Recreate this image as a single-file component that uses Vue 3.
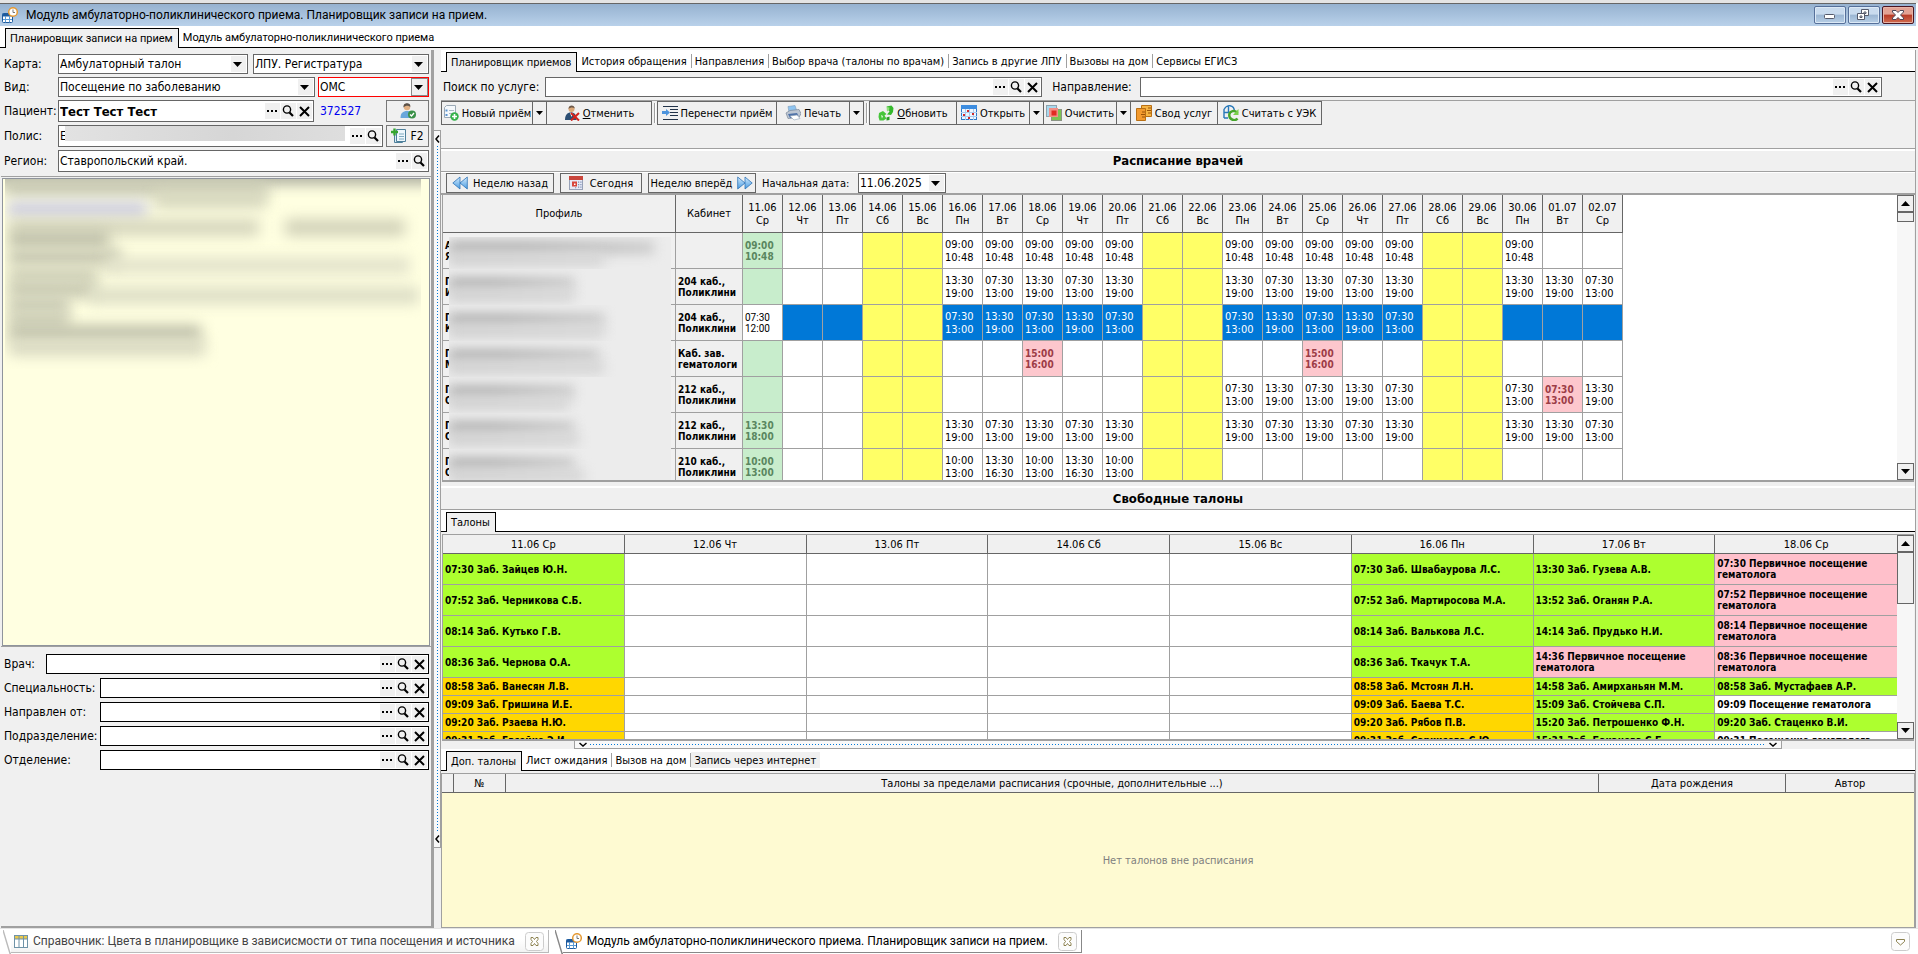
<script setup>
import { ref } from 'vue'

const mainTabs = ['Планировщик приемов', 'История обращения', 'Направления', 'Выбор врача (талоны по врачам)', 'Запись в другие ЛПУ', 'Вызовы на дом', 'Сервисы ЕГИСЗ']
const extraTabs = ['Доп. талоны', 'Лист ожидания', 'Вызов на дом', 'Запись через интернет']
const filters = ['Врач:', 'Специальность:', 'Направлен от:', 'Подразделение:', 'Отделение:']

const patient = ref('Тест Тест Тест')
const region = ref('Ставропольский край.')

const weekdays = ['Ср', 'Чт', 'Пт', 'Сб', 'Вс', 'Пн', 'Вт']
const days = Array.from({ length: 22 }, (_, i) => {
  const d = 11 + i
  return {
    date: d <= 30 ? `${d}.06` : `0${d - 30}.07`,
    name: weekdays[i % 7],
    weekend: i % 7 === 3 || i % 7 === 4
  }
})

const spans = {
  A: '07:30\n13:00',
  B: '13:30\n19:00',
  C: '10:00\n13:00',
  D: '13:30\n16:30',
  E: '09:00\n10:48',
  F: '15:00\n16:00'
}

const doctors = [
  { a: 'А', b: 'Я', w: 205, w2: 155, room: '', today: '09:00\n10:48', plan: '.....EEEEE..EEEEE..E..' },
  { a: 'П', b: 'И', w: 125, w2: 125, room: '204 каб.,\nПоликлини', today: '', plan: '.....BABAB..BABAB..BBA' },
  { a: 'П', b: 'К', w: 155, w2: 155, room: '204 каб.,\nПоликлини', today: '07:30\n12:00', plan: '.....ABABA..ABABA.....', selected: true },
  { a: 'П', b: 'М', w: 150, w2: 155, room: 'Каб. зав.\nгематологи', today: '', plan: '.......f......f.......' },
  { a: 'П', b: 'О', w: 125, w2: 120, room: '212 каб.,\nПоликлини', today: '', plan: '............ABABA..AaB' },
  { a: 'П', b: 'О', w: 125, w2: 130, room: '212 каб.,\nПоликлини', today: '13:30\n18:00', plan: '.....BABAB..BABAB..BBA' },
  { a: 'П', b: 'О', w: 125, w2: 135, room: '210 каб.,\nПоликлини', today: '10:00\n13:00', plan: '.....CDCDC............' }
]

function cellText(doc, i) {
  if (i === 0) return doc.today
  return spans[doc.plan[i].toUpperCase()] || ''
}

function cellClass(doc, i) {
  if (days[i].weekend) return 'weekend'
  if (i === 0) return doc.selected ? 'current' : 'today'
  if (/[a-z]/.test(doc.plan[i])) return 'alert'
  return doc.selected ? 'selected' : ''
}

const ticketDays = ['11.06 Ср', '12.06 Чт', '13.06 Пт', '14.06 Сб', '15.06 Вс', '16.06 Пн', '17.06 Вт', '18.06 Ср']
const blank = () => [['', ''], ['', ''], ['', ''], ['', '']]
const row = (a, b, c, d) => [a, ...blank(), b, c, d]
const tickets = [
  row(['07:30 Заб. Зайцев Ю.Н.', 'free'], ['07:30 Заб. Швабаурова Л.С.', 'free'], ['13:30 Заб. Гузева А.В.', 'free'], ['07:30 Первичное посещение гематолога', 'initial']),
  row(['07:52 Заб. Черникова С.Б.', 'free'], ['07:52 Заб. Мартиросова М.А.', 'free'], ['13:52 Заб. Оганян Р.А.', 'free'], ['07:52 Первичное посещение гематолога', 'initial']),
  row(['08:14 Заб. Кутько Г.В.', 'free'], ['08:14 Заб. Валькова Л.С.', 'free'], ['14:14 Заб. Прудько Н.И.', 'free'], ['08:14 Первичное посещение гематолога', 'initial']),
  row(['08:36 Заб. Чернова О.А.', 'free'], ['08:36 Заб. Ткачук Т.А.', 'free'], ['14:36 Первичное посещение гематолога', 'initial'], ['08:36 Первичное посещение гематолога', 'initial']),
  row(['08:58 Заб. Ванесян Л.В.', 'busy'], ['08:58 Заб. Мстоян Л.Н.', 'busy'], ['14:58 Заб. Амирханьян М.М.', 'free'], ['08:58 Заб. Мустафаев А.Р.', 'free']),
  row(['09:09 Заб. Гришина И.Е.', 'busy'], ['09:09 Заб. Баева Т.С.', 'busy'], ['15:09 Заб. Стойчева С.П.', 'free'], ['09:09 Посещение гематолога', '']),
  row(['09:20 Заб. Рзаева Н.Ю.', 'busy'], ['09:20 Заб. Рябов П.В.', 'busy'], ['15:20 Заб. Петрошенко Ф.Н.', 'free'], ['09:20 Заб. Стаценко В.И.', 'free']),
  row(['09:31 Заб. Евсейко Э.И.', 'busy'], ['09:31 Заб. Саркисова С.Ю.', 'busy'], ['15:31 Заб. Баканова С.Б.', 'free'], ['09:31 Посещение гематолога', ''])
]

const memoLines = [
  { y: -12, x: -10, w: 440, c: '#a9aa9c' },
  { y: 0, x: 0, w: 262, c: '#c9cab4' }, { y: 12, x: 150, w: 112, c: '#d6d7be' },
  { y: 22, x: 2, w: 140, c: '#cfcfe2' },
  { y: 40, x: 4, w: 250, c: '#d6d6bd' }, { y: 40, x: 280, w: 120, c: '#d2d2b9' }, { y: 52, x: 4, w: 100, c: '#bfc0aa' },
  { y: 70, x: 4, w: 112, c: '#c5c6b0' }, { y: 78, x: 100, w: 305, c: '#e3e3cb' },
  { y: 88, x: 4, w: 88, c: '#d0d1b9' }, { y: 102, x: 4, w: 88, c: '#c8c9b2' },
  { y: 108, x: 84, w: 330, c: '#dddec6' }, { y: 118, x: 4, w: 60, c: '#c8c9b3' },
  { y: 132, x: 4, w: 60, c: '#cdceb7' }, { y: 146, x: 4, w: 192, c: '#bfc0aa' },
  { y: 160, x: 4, w: 196, c: '#dadac3' }
]
</script>

<template>
  <div class="app">
    <svg class="defs" aria-hidden="true">
      <defs>
        <linearGradient id="blueGrad" x1="0" y1="0" x2="0" y2="1">
          <stop offset="0" stop-color="#d3ecff" /><stop offset="1" stop-color="#4a9be0" />
        </linearGradient>
      </defs>
      <symbol id="i-dots" viewBox="0 0 15 16"><path d="M2 7h2v2H2zM6 7h2v2H6zM10 7h2v2h-2z" fill="#000" /></symbol>
      <symbol id="i-find" viewBox="0 0 15 16"><circle cx="6" cy="6.5" r="3.6" fill="none" stroke="#000" stroke-width="1.4" /><path d="M8.5 9.5l3.5 3.5" stroke="#000" stroke-width="2.2" /></symbol>
      <symbol id="i-x" viewBox="0 0 15 16"><path d="M3 4l9 9M12 4l-9 9" stroke="#000" stroke-width="2" fill="none" /></symbol>
      <symbol id="i-down" viewBox="0 0 9 5"><path d="M0 0h9L4.500 5z" fill="#000" /></symbol>
      <symbol id="i-up" viewBox="0 0 9 5"><path d="M0 5h9L4.500 0z" fill="#000" /></symbol>
      <symbol id="i-planner" viewBox="0 0 16 16">
        <rect x="0.500" y="6.500" width="10" height="9" rx="1" fill="#fff" stroke="#1d5a9e" />
        <path d="M0.500 6.500h10v3h-10z" fill="#1d5a9e" /><path d="M3.500 9v6.500M7.500 9v6.500M1 12.500h9" stroke="#5b9bd5" />
        <circle cx="11" cy="5" r="4.300" fill="#fff" stroke="#e59a35" stroke-width="1.500" /><path d="M11 2.500V5.500h2" stroke="#777" fill="none" />
      </symbol>
      <symbol id="i-table" viewBox="0 0 14 13"><rect x="0.500" y="0.500" width="13" height="12" fill="#fff" stroke="#6f93a8" /><path d="M1 1h12v3H1z" fill="#e9c84c" /><path d="M5 0v13M9.500 0v13M0 4h14" stroke="#6f93a8" /></symbol>
      <symbol id="i-close" viewBox="0 0 19 19"><rect x="0.500" y="0.500" width="18" height="18" rx="3" fill="#fcfcfc" stroke="#ccc" /><path d="M6 5.500h2l1.500 2 1.500-2h2v2L11.500 9.500l1.500 2v2h-2l-1.500-2-1.500 2H6v-2l1.500-2-1.500-2z" fill="#fff" stroke="#8c8250" /></symbol>
    </svg>

    <header class="titlebar">
      <svg class="ic16"><use href="#i-planner" /></svg>
      <h1>Модуль амбулаторно-поликлинического приема. Планировщик записи на прием.</h1>
      <div class="winbtns">
        <button type="button" aria-label="Свернуть"><svg viewBox="0 0 30 16"><rect x="9.500" y="7.500" width="10" height="4" rx="1" fill="#fff" stroke="#555a6b" /></svg></button>
        <button type="button" aria-label="Восстановить"><svg viewBox="0 0 30 16"><path d="M12.500 2.500h7v6h-7z" fill="#fff" stroke="#555a6b" /><path d="M15 5h2v1.500h-2z" fill="none" stroke="#555a6b" /><path d="M8.500 6.500h7v6h-7z" fill="#fff" stroke="#555a6b" /><path d="M11 9h2v1.500h-2z" fill="none" stroke="#555a6b" /></svg></button>
        <button type="button" class="close" aria-label="Закрыть"><svg viewBox="0 0 30 16"><path d="M9.500 3.500h3.500l2 2 2-2h3.500v1.500L17.500 8l3 3v1.500H17l-2-2-2 2H9.500V11l3-3-3-3z" fill="#fff" stroke="#4c4656" /></svg></button>
      </div>
    </header>

    <div class="tabs top" role="tablist">
      <button class="tab active" role="tab" aria-selected="true">Планировщик записи на прием</button>
      <button class="tab" role="tab">Модуль амбулаторно-поликлинического приема</button>
    </div>

    <main class="main">
      <aside class="left">
        <form class="card" @submit.prevent>
          <div class="frow">
            <label for="card">Карта:</label>
            <span class="combo card-a"><select id="card"><option>Амбулаторный талон</option></select><svg><use href="#i-down" /></svg></span>
            <span class="combo grow"><select aria-label="Место"><option>ЛПУ. Регистратура</option></select><svg><use href="#i-down" /></svg></span>
          </div>
          <div class="frow">
            <label for="kind">Вид:</label>
            <span class="combo grow"><select id="kind"><option>Посещение по заболеванию</option></select><svg><use href="#i-down" /></svg></span>
            <span class="combo oms"><select aria-label="Источник оплаты"><option>ОМС</option></select><svg><use href="#i-down" /></svg></span>
          </div>
          <div class="frow tall">
            <label for="patient">Пациент:</label>
            <span class="lookup grow big">
              <input id="patient" v-model="patient" />
              <button type="button" aria-label="Выбрать"><svg><use href="#i-dots" /></svg></button>
              <button type="button" aria-label="Найти"><svg><use href="#i-find" /></svg></button>
              <button type="button" aria-label="Очистить"><svg><use href="#i-x" /></svg></button>
            </span>
            <a class="num" href="#">372527</a>
            <button type="button" class="side" aria-label="Карта пациента">
              <svg class="ic16" viewBox="0 0 16 16"><circle cx="7" cy="4" r="3.200" fill="#e3b184" /><path d="M3.500 4.500C3 .5 6 0 7.500.2c2.500.3 3.200 2 2.700 4C9.500 2.500 5.500 2 3.500 4.500z" fill="#5b5148" /><path d="M.5 15c0-5 2.500-7 6.500-7s5 2.500 5 7z" fill="#6aa7dc" /><circle cx="12" cy="11.500" r="4" fill="#3a9148" /><path d="M10 11.500l1.500 1.500 2.500-3" stroke="#fff" stroke-width="1.300" fill="none" /></svg>
            </button>
          </div>
          <div class="frow tall">
            <label for="policy">Полис:</label>
            <span class="lookup grow policy">
              <input id="policy" value="Е" />
              <i class="smudge"></i>
              <button type="button" aria-label="Выбрать"><svg><use href="#i-dots" /></svg></button>
              <button type="button" aria-label="Найти"><svg><use href="#i-find" /></svg></button>
            </span>
            <button type="button" class="side">
              <svg class="ic16" viewBox="0 0 16 16"><path d="M3.500 3.500h8v11h-8z" fill="#dcecf5" stroke="#4d7f9a" /><path d="M5.500 1.500h9v12h-9z" fill="#eef7fc" stroke="#4d7f9a" /><path d="M8 6h5M8 8.500h5M8 11h5" stroke="#7ea9bf" /><path d="M0 4h7M3.500 .5v7" stroke="#35a52f" stroke-width="2.400" /></svg>
              F2
            </button>
          </div>
          <div class="frow tall">
            <label for="region">Регион:</label>
            <span class="lookup grow">
              <input id="region" v-model="region" />
              <button type="button" aria-label="Выбрать"><svg><use href="#i-dots" /></svg></button>
              <button type="button" aria-label="Найти"><svg><use href="#i-find" /></svg></button>
            </span>
          </div>
        </form>
        <section class="memo">
          <div class="veil">
            <i v-for="(l, i) in memoLines" :key="i" :style="{ top: l.y + 'px', left: l.x + 'px', width: l.w + 'px', background: l.c }"></i>
          </div>
        </section>
        <form class="filters" @submit.prevent>
          <div v-for="(f, i) in filters" :key="f" class="flt" :class="{ narrow: i === 0 }">
            <label :for="'f' + i">{{ f }}</label>
            <span class="lookup dark grow">
              <input :id="'f' + i" />
              <button type="button" aria-label="Выбрать"><svg><use href="#i-dots" /></svg></button>
              <button type="button" aria-label="Найти"><svg><use href="#i-find" /></svg></button>
              <button type="button" aria-label="Очистить"><svg><use href="#i-x" /></svg></button>
            </span>
          </div>
        </form>
      </aside>

      <div class="vsplit">
        <div class="grip">
          <svg viewBox="0 0 5 8"><path d="M4 .5L1 4l3 3.500" fill="none" stroke="#000" stroke-width="1.500" /></svg>
          <span></span>
          <svg viewBox="0 0 5 8"><path d="M4 .5L1 4l3 3.500" fill="none" stroke="#000" stroke-width="1.500" /></svg>
        </div>
      </div>

      <section class="right">
        <div class="tabs" role="tablist">
          <button v-for="(t, i) in mainTabs" :key="t" class="tab" :class="{ active: i === 0 }" role="tab">{{ t }}</button>
        </div>

        <div class="search">
          <label for="svc">Поиск по услуге:</label>
          <span class="lookup svc">
            <input id="svc" />
            <button type="button" aria-label="Выбрать"><svg><use href="#i-dots" /></svg></button>
            <button type="button" aria-label="Найти"><svg><use href="#i-find" /></svg></button>
            <button type="button" aria-label="Очистить"><svg><use href="#i-x" /></svg></button>
          </span>
          <label for="ref" class="ref">Направление:</label>
          <span class="lookup refer">
            <input id="ref" />
            <button type="button" aria-label="Выбрать"><svg><use href="#i-dots" /></svg></button>
            <button type="button" aria-label="Найти"><svg><use href="#i-find" /></svg></button>
            <button type="button" aria-label="Очистить"><svg><use href="#i-x" /></svg></button>
          </span>
        </div>

        <div class="toolbar">
          <button type="button" class="tb w-new">
            <svg class="ic16" viewBox="0 0 16 16"><path d="M3.500 .5h9v12h-11v-10z" fill="#f4f8fc" stroke="#9aa8b5" /><path d="M2.500 4.500h2v2h-2zM2.500 9h2v2h-2z" fill="#5b93cf" /><path d="M6 5.500h5M6 8.500h3" stroke="#aab8c5" /><circle cx="11.500" cy="11.500" r="4.200" fill="#35b14a" /><path d="M11.500 9v5M9 11.500h5" stroke="#fff" stroke-width="1.600" /></svg>
            Новый приём
          </button>
          <button type="button" class="tb arrow" aria-label="Ещё"><svg class="dn"><use href="#i-down" /></svg></button>
          <button type="button" class="tb w-cancel">
            <svg class="ic16" viewBox="0 0 16 16"><circle cx="7.500" cy="4" r="3" fill="#dba878" /><path d="M4.500 4c0-4.500 6-4.500 6.300-.5C9 2 6.500 2 4.500 4z" fill="#6d5a4b" /><path d="M1 15c0-5 2-7.500 6-7.500s5.500 2.500 5.500 7.500z" fill="#2c4f74" /><path d="M6 8l1.500 4L9 8z" fill="#fff" /><path d="M7 8l8 7.500M15 8L7 15.500" stroke="#d4231c" stroke-width="2" /></svg>
            <span><u>О</u>тменить</span>
          </button>
          <i class="sep"></i>
          <button type="button" class="tb w-move">
            <svg class="ic16" viewBox="0 0 16 16"><path d="M1 1.500h15M8 4.500h8M8 7.500h8M8 10.500h8M1 14.500h15" stroke="#223248" stroke-width="1.200" /><path d="M0 6h4V4l4 3.500L4 11V9H0z" fill="#4d94dd" /></svg>
            Перенести приём
          </button>
          <button type="button" class="tb w-print">
            <svg class="ic16" viewBox="0 0 16 16"><path d="M3 1.500l7-1 2 6-8 1z" fill="#8ec4f0" stroke="#7a9ab8" stroke-width=".6" /><path d="M1 8l4-2.500 9-1 2 4-2 4-11 1z" fill="#bcc6d3" stroke="#7a8698" stroke-width=".7" /><path d="M3 9l9-1 1.500 3L5 13z" fill="#4f72a8" /><path d="M5 11l7-1 3 3.500-6 1.500z" fill="#fff" stroke="#8fa1b5" stroke-width=".6" /></svg>
            Печать
          </button>
          <button type="button" class="tb arrow" aria-label="Ещё"><svg class="dn"><use href="#i-down" /></svg></button>
          <i class="sep"></i>
          <button type="button" class="tb w-refresh">
            <svg class="ic16" viewBox="0 0 16 16"><path d="M8.500 1.500l5-1 2 2.500-.5 4-2 3-4-.5 2.500-3z" fill="#35b82c" /><path d="M8.500 2l3 .5-.5 3-2 1z" fill="#8fe07a" /><path d="M1 8l4-2 3.500 3-2 1.500 2 3-3 2H1.500L.5 12z" fill="#46c53a" /><path d="M3 10l2 1-1 2.500z" fill="#e8fbe2" /><path d="M8.500 12.500l3-1v3.500l-3 .5z" fill="#2a9e25" /></svg>
            <span><u>О</u>бновить</span>
          </button>
          <button type="button" class="tb w-open">
            <svg class="ic16" viewBox="0 0 16 16"><rect x=".5" y=".5" width="15" height="14" fill="#eef6ff" stroke="#2c77c8" /><path d="M0 0h16v4H0z" fill="#3d8de0" /><path d="M4.500 4v11M8.500 4v11M12.500 4v11M0 7.500h16M0 11.500h16" stroke="#a9cbee" /><path d="M6 5h2v2H6zM2 9h2v2H2zM11 8h2v2h-2zM7 12h2v2H7z" fill="#cf2b2b" /></svg>
            Открыть
          </button>
          <button type="button" class="tb arrow" aria-label="Ещё"><svg class="dn"><use href="#i-down" /></svg></button>
          <button type="button" class="tb w-clear">
            <svg class="ic16" viewBox="0 0 16 16"><rect x="5.500" y="4.500" width="10" height="11" fill="#7cc153" stroke="#8a9484" /><rect x=".5" y=".5" width="10" height="11" fill="#a8d8ee" stroke="#8fa3ae" /><rect x="3" y="3" width="9" height="9" fill="#f38f86" /><rect x="5.500" y="5.500" width="5" height="5" fill="#e02a22" /></svg>
            Очистить
          </button>
          <button type="button" class="tb arrow" aria-label="Ещё"><svg class="dn"><use href="#i-down" /></svg></button>
          <button type="button" class="tb w-sum">
            <svg class="ic16" viewBox="0 0 16 16"><path d="M5.500 .5h10v11h-10z" fill="#f6b443" stroke="#b96f13" /><path d="M.5 3.500h9v12h-9z" fill="#f39a2e" stroke="#b96f13" /><path d="M6 7h3M5 9.500h4M6 12h3M12 3h3M11 5.500h4M12 8h3" stroke="#9a5208" /></svg>
            Свод услуг
          </button>
          <button type="button" class="tb w-uek">
            <svg class="ic16" viewBox="0 0 16 16"><path d="M1 13V4.500C3 1 5 .5 7 .7c3 .3 4.500 2.300 4.500 6.300M1 7.500h7M5.500 1v6.500M1 13h4" fill="none" stroke="#2878b8" stroke-width="1.400" /><path d="M14.500 8C12 4.500 6.500 6 6.200 10c0 5 6 6.500 8.300 3.500" fill="none" stroke="#46a52b" stroke-width="2.400" /><path d="M15.500 4v6h-5.500z" fill="#79cf4a" /></svg>
            Считать с УЭК
          </button>
        </div>

        <h2 class="caption">Расписание врачей</h2>

        <div class="nav">
          <button type="button" class="nb w-prev">
            <svg class="ic16" viewBox="0 0 16 16"><path d="M8 2v12L.8 8zM15.300 2v12L8 8z" fill="url(#blueGrad)" stroke="#2f74b8" stroke-width=".8" /></svg>
            Неделю назад
          </button>
          <button type="button" class="nb w-today">
            <svg class="ic16" viewBox="0 0 16 16"><rect x=".5" y="1.500" width="13" height="13" fill="#e6eaf6" stroke="#98a2b8" /><path d="M0 1h14v4H0z" fill="#c9463c" /><path d="M3 6.500h5v5H3z" fill="#d7473d" /><path d="M5 8.500h1.500V10H5z" fill="#fff" /><path d="M9 6.500h1.200v1.200H9zM11.300 6.500h1.200v1.200h-1.200zM9 9h1.200v1.200H9zM11.300 9h1.200v1.200h-1.200zM9 11.500h1.200v1.200H9zM11.300 11.500h1.200v1.200h-1.200zM6 12.300h1.200v1H6z" fill="#7d8fb5" /></svg>
            Сегодня
          </button>
          <button type="button" class="nb w-next">
            Неделю вперёд
            <svg class="ic16" viewBox="0 0 16 16"><path d="M8 2v12l7.200-6zM.7 2v12L8 8z" fill="url(#blueGrad)" stroke="#2f74b8" stroke-width=".8" /></svg>
          </button>
          <label for="start">Начальная дата:</label>
          <span class="combo date"><select id="start"><option>11.06.2025</option></select><svg><use href="#i-down" /></svg></span>
        </div>

        <div class="sheet schedule">
          <div class="view">
            <table class="plan">
              <colgroup><col class="c-prof" /><col class="c-room" /><col v-for="d in days" :key="d.date" class="c-day" /></colgroup>
              <thead>
                <tr><th>Профиль</th><th>Кабинет</th><th v-for="d in days" :key="d.date">{{ d.date }}<br />{{ d.name }}</th></tr>
              </thead>
              <tbody>
                <tr v-for="(doc, r) in doctors" :key="r">
                  <td class="prof">
                    {{ doc.a }}<br />{{ doc.b }}
                    <span class="mask"><i class="m1" :style="{ width: doc.w + 'px' }"></i><i class="m2" :style="{ width: doc.w2 + 'px' }"></i></span>
                  </td>
                  <td class="room">{{ doc.room }}</td>
                  <td v-for="(d, i) in days" :key="i" :class="cellClass(doc, i)">{{ cellText(doc, i) }}</td>
                </tr>
              </tbody>
            </table>
          </div>
          <div class="scroll">
            <button type="button" aria-label="Вверх"><svg><use href="#i-up" /></svg></button>
            <div class="track"><i class="thumb short"></i></div>
            <button type="button" aria-label="Вниз"><svg><use href="#i-down" /></svg></button>
          </div>
        </div>

        <h2 class="caption second">Свободные талоны</h2>
        <div class="tabs" role="tablist"><button class="tab active" role="tab">Талоны</button></div>

        <div class="sheet free-list">
          <div class="view">
            <table class="tickets">
              <thead><tr><th v-for="d in ticketDays" :key="d">{{ d }}</th></tr></thead>
              <tbody>
                <tr v-for="(t, r) in tickets" :key="r" :class="{ high: r < 4 }">
                  <td v-for="(c, i) in t" :key="i" :class="c[1]">{{ c[0] }}</td>
                </tr>
              </tbody>
            </table>
          </div>
          <div class="scroll">
            <button type="button" aria-label="Вверх"><svg><use href="#i-up" /></svg></button>
            <div class="track"><i class="thumb long"></i></div>
            <button type="button" aria-label="Вниз"><svg><use href="#i-down" /></svg></button>
          </div>
        </div>

        <div class="hsplit">
          <div class="grip">
            <svg viewBox="0 0 8 5"><path d="M.5 1L4 4l3.500-3" fill="none" stroke="#000" stroke-width="1.500" /></svg>
            <span></span>
            <svg viewBox="0 0 8 5"><path d="M.5 1L4 4l3.500-3" fill="none" stroke="#000" stroke-width="1.500" /></svg>
          </div>
        </div>

        <div class="tabs lower" role="tablist">
          <button v-for="(t, i) in extraTabs" :key="t" class="tab" :class="{ active: i === 0, hot: i === 3 }" role="tab">{{ t }}</button>
        </div>
        <div class="extra">
          <table>
            <colgroup><col class="e-mark" /><col class="e-num" /><col /><col class="e-birth" /><col class="e-author" /></colgroup>
            <thead><tr><th></th><th>№</th><th>Талоны за пределами расписания (срочные, дополнительные ...)</th><th>Дата рождения</th><th>Автор</th></tr></thead>
          </table>
          <p>Нет талонов вне расписания</p>
        </div>
      </section>
    </main>

    <footer class="windows">
      <div class="wtab">
        <svg class="slant" viewBox="0 0 8 24" preserveAspectRatio="none"><path d="M0 0l7 23.500h1" fill="none" stroke="#bbb" stroke-width="1.400" /></svg>
        <div class="wbody">
          <svg class="ic14"><use href="#i-table" /></svg>
          <span>Справочник: Цвета в планировщике в зависисмости от типа посещения и источника</span>
          <button type="button" aria-label="Закрыть вкладку"><svg><use href="#i-close" /></svg></button>
        </div>
      </div>
      <div class="wtab current-win">
        <svg class="slant" viewBox="0 0 8 24" preserveAspectRatio="none"><path d="M0 0l7 23.500h1" fill="none" stroke="#888" stroke-width="1.400" /></svg>
        <div class="wbody">
          <svg class="ic16"><use href="#i-planner" /></svg>
          <span>Модуль амбулаторно-поликлинического приема. Планировщик записи на прием.</span>
          <button type="button" aria-label="Закрыть вкладку"><svg><use href="#i-close" /></svg></button>
        </div>
      </div>
      <button type="button" class="list" aria-label="Список окон"><svg viewBox="0 0 19 19"><rect x=".5" y=".5" width="18" height="18" rx="3" fill="#fcfcfc" stroke="#ccc" /><path d="M5.500 7.500h8v2l-4 3.500-4-3.500z" fill="#fff" stroke="#8c8250" /></svg></button>
    </footer>
  </div>
</template>

<style>
html, body { background: #fff; overflow: hidden; }
</style>

<style scoped>
.app { height: 100vh; display: flex; flex-direction: column; background: #fff; color: #000; font-family: "DejaVu Sans Condensed", "DejaVu Sans", sans-serif; font-size: 11px; border-top: 3px solid #e4e4e4; box-sizing: border-box; }
.app *, .app *::before { box-sizing: border-box; }
.defs { position: absolute; width: 0; height: 0; }
button, input, select { font: inherit; color: inherit; margin: 0; padding: 0; border: 0; background: none; border-radius: 0; outline: 0; }
h1, h2, p { margin: 0; font-weight: normal; }
.ic16 { width: 16px; height: 16px; flex: none; }
.ic14 { width: 14px; height: 13px; flex: none; }
.grow { flex: 1; min-width: 0; }

.titlebar { height: 23px; flex: none; margin-right: 2px; border-top: 1px solid #666; background: linear-gradient(#96b2d0, #b9d1ea); display: flex; align-items: center; padding-left: 2px; }
.titlebar h1 { flex: 1; margin-left: 8px; font: 12px/20px Roboto, "Noto Sans", sans-serif; }
.winbtns { display: flex; gap: 2px; padding-right: 2px; }
.winbtns button { width: 32px; height: 18px; border: 1px solid #56709a; border-radius: 2px; background: linear-gradient(#c9dbee 45%, #9bb6d3 50%, #b7cfe6); box-shadow: inset 0 0 0 1px #dce9f6; }
.winbtns svg { display: block; width: 30px; height: 16px; }
.winbtns .close { border-color: #4a1420; background: linear-gradient(#e2a294 45%, #b83a26 50%, #d06c50); box-shadow: inset 0 0 0 1px #e7b3a6; }

.tabs { height: 22px; flex: none; display: flex; align-items: flex-end; padding-left: 5px; background: #fff; border-bottom: 1px solid #000; }
.tabs.top { font-family: Roboto, "Noto Sans", sans-serif; }
.tab { height: 19px; padding: 0 4px; line-height: 19px; white-space: nowrap; position: relative; }
.tab.active { height: 20px; margin-bottom: -1px; padding: 0 5px 0 4px; border: 1px solid #000; border-bottom: 0; background: #f0f0f0; }
.tab:not(.active) + .tab::before { content: ""; position: absolute; left: 0; top: 2px; height: 14px; border-left: 1px solid #a0a0a0; }
.tab.hot { background: linear-gradient(#f0f0f0, #f0f0f0) 1px 1px / 100% 16px no-repeat; }

.main { flex: 1; min-height: 0; display: flex; padding: 2px 2px 0 1px; background: #f0f0f0; }
.left { width: 433px; flex: none; display: flex; flex-direction: column; border-right: 3px solid #a0a0a0; border-bottom: 2px solid #a0a0a0; font-size: 12px; }
.card { padding: 4px 2px 4px 3px; border-bottom: 1px solid #a0a0a0; display: flex; flex-direction: column; gap: 3px; }
.frow { height: 20px; display: flex; align-items: center; gap: 3px; }
.frow:first-child { gap: 5px; }
.frow label { width: 51px; flex: none; white-space: nowrap; }
.frow:first-child label { width: 49px; }
.frow.tall { height: 22px; }
.combo { position: relative; height: 20px; border: 1px solid #666; background: #fff; display: flex; }
.combo::before { content: ""; position: absolute; right: 1px; top: 1px; bottom: 1px; width: 15px; background: #f0f0f0; }
.combo svg { position: absolute; right: 5px; top: 7px; width: 9px; height: 5px; pointer-events: none; }
.combo select { width: 100%; appearance: none; padding-left: 1px; font-size: 12px; }
.card-a { width: 190px; }
.combo.oms { width: 111px; border-color: #f00; }
.combo.oms::before { right: 0; top: 0; bottom: 0; width: 17px; border: 1px solid #888; }
.lookup { display: flex; align-items: center; height: 20px; border: 1px solid #666; background: #fff; padding-right: 1px; gap: 1px; position: relative; }
.tall .lookup { height: 22px; }
.lookup.dark { border-color: #000; }
.lookup input { flex: 1; min-width: 0; padding-left: 1px; height: 18px; }
.lookup button { width: 15px; height: 16px; background: #f0f0f0; flex: none; }
.lookup button svg { display: block; width: 15px; height: 16px; }
.big input { font: bold 13px "DejaVu Sans Condensed", sans-serif; }
.num { width: 66px; padding-left: 3px; color: #0000f0; text-decoration: none; }
.side { width: 43px; height: 22px; border: 1px solid #777; background: #f0f0f0; display: flex; align-items: center; justify-content: center; gap: 3px; }
.smudge { position: absolute; left: 6px; right: 37px; top: 0; bottom: 5px; background: linear-gradient(90deg, #e2e2e2, #d6d6d6 60%, #dedede); }

.memo { flex: 1; min-height: 0; margin: 1px 1px 0; border: 1px solid #8f949c; background: #ffffe1; overflow: hidden; }
.veil { position: relative; width: 416px; height: 190px; margin-left: 2px; overflow: hidden; }
.veil i { position: absolute; height: 17px; filter: blur(7px); }
.filters { height: 280px; flex: none; border-top: 1px solid #a0a0a0; padding: 7px 2px 0 3px; display: flex; flex-direction: column; gap: 4px; }
.flt { display: flex; align-items: center; height: 20px; }
.flt label { width: 96px; flex: none; }
.flt.narrow label { width: 42px; }

.vsplit { width: 7px; flex: none; padding-top: 80px; }
.vsplit .grip { height: 720px; max-height: 90%; border: 1px solid #a0a0a0; border-left: 0; background: #f8f8f8; display: flex; flex-direction: column; align-items: center; padding: 4px 0; gap: 3px; }
.grip svg { flex: none; }
.vsplit svg { width: 5px; height: 8px; }
.vsplit span { flex: 1; width: 1px; background: repeating-linear-gradient(#0078d7 0 1px, transparent 1px 3px); }

.right { flex: 1; min-width: 0; display: flex; flex-direction: column; border-right: 1px solid #a0a0a0; }
.search { height: 29px; flex: none; display: flex; align-items: center; padding: 2px 0 0 2px; border-bottom: 1px solid #a0a0a0; font-size: 12px; }
.search label { width: 102px; flex: none; }
.search .ref { width: 88px; margin-left: 10px; }
.svc { flex: 497; }
.refer { flex: 743; margin-right: 33px; }
.toolbar { height: 48px; flex: none; display: flex; align-items: flex-start; border-bottom: 1px solid #a0a0a0; }
.tb { height: 24px; display: flex; align-items: center; justify-content: center; gap: 3px; border: 1px solid #666; margin-right: -1px; white-space: nowrap; background: #f0f0f0; }
.dn { width: 7px; height: 4px; }
.arrow { width: 15px; }
.sep { width: 2px; height: 20px; margin: 2px 1px 0 3px; border-left: 1px solid #a0a0a0; background: #fff; }
.w-new { width: 92px; } .w-cancel { width: 106px; } .w-move { width: 120px; } .w-print { width: 74px; } .w-refresh { width: 88px; } .w-open { width: 74px; } .w-clear { width: 74px; } .w-sum { width: 88px; } .w-uek { width: 105px; }
.caption { height: 23px; flex: none; border-top: 2px solid #fff; border-bottom: 1px solid #a0a0a0; text-align: center; font: bold 13px/20px "DejaVu Sans Condensed", sans-serif; }
.second { height: 24px; margin-top: 4px; line-height: 21px; }
.nav { height: 23px; flex: none; display: flex; align-items: center; padding-left: 5px; border-top: 1px solid #fff; border-bottom: 2px solid #a0a0a0; }
.nb { height: 20px; border: 1px solid #666; display: flex; align-items: center; justify-content: center; gap: 5px; white-space: nowrap; margin-right: 6px; }
.w-prev { width: 108px; } .w-today { width: 82px; } .w-next { width: 108px; }
.nav label { width: 96px; white-space: nowrap; }
.date { width: 88px; }

.sheet { display: flex; flex: none; background: #fff; border-left: 1px solid #a0a0a0; border-bottom: 2px solid #a0a0a0; margin-left: 1px; margin-right: 1px; }
.schedule { height: 287px; }
.view { flex: 1; min-width: 0; overflow: hidden; }
table { border-collapse: separate; border-spacing: 0; table-layout: fixed; }
th { font-weight: normal; background: #f0f0f0; border-right: 1px solid #666; border-bottom: 1px solid #666; padding: 0; line-height: 13px; }
td { border-right: 1px solid #a0a0a0; border-bottom: 1px solid #a0a0a0; padding: 0 2px; }
.plan { width: 1180px; }
.c-prof { width: 233px; } .c-room { width: 67px; } .c-day { width: 40px; }
.plan th { height: 38px; }
.plan td { height: 36px; white-space: pre-line; line-height: 13px; overflow: hidden; }
.plan .prof, .plan .room { background: #f0f0f0; font-size: 10px; font-weight: bold; line-height: 11px; white-space: pre; }
.plan .prof { padding: 0 0 0 2px; position: relative; white-space: normal; overflow: visible; }
.mask { position: absolute; left: 6px; top: 0; right: 4px; height: 36px; background: #ececec; overflow: hidden; }
tr:first-child .mask { top: 4px; height: 32px; }
tr:first-child .mask i { margin-top: -4px; }
tr:last-child .mask { height: 32px; }
.mask i { position: absolute; left: 0; height: 13px; filter: blur(6px); }
.m1 { top: 8px; background: linear-gradient(90deg, #b4b4b4 35%, #cccccc); }
.m2 { top: 20px; background: linear-gradient(90deg, #d0d0d0, #d6d6d6); }
.weekend { background: #ffff66; }
.plan .today { background: #c8edcc; color: #5a865f; font-size: 10px; font-weight: bold; line-height: 11px; }
.plan .alert { background: #fdc7cd; color: #9c3c46; font-size: 10px; font-weight: bold; line-height: 11px; }
.plan .current { font: 10px/11px Roboto, "Noto Sans", sans-serif; }
.selected { background: #0078d7; color: #fff; }

.scroll { width: 17px; flex: none; display: flex; flex-direction: column; }
.scroll button { height: 17px; border: 1px solid #666; background: #f0f0f0; display: flex; align-items: center; justify-content: center; }
.scroll svg { width: 9px; height: 5px; }
.track { flex: 1; background: #f7f7f7; }
.thumb { display: block; background: #f0f0f0; border: 1px solid #666; }
.short { height: 10px; }
.long { height: 52px; }

.free-list { height: 207px; margin-top: 2px; border-top: 1px solid #a0a0a0; }
.tickets { width: 100%; }
.tickets th { height: 19px; }
.tickets td { height: 18px; font-size: 10px; font-weight: bold; line-height: 11px; }
.tickets .high td { height: 31px; }
.tickets td:last-child, .tickets th:last-child { border-right: 0; }
.free { background: #adff2f; }
.busy { background: #ffd700; }
.initial { background: #ffc0cb; }

.hsplit { height: 8px; flex: none; display: flex; justify-content: center; }
.hsplit .grip { width: 82%; border: 1px solid #a0a0a0; border-top: 0; background: #f8f8f8; display: flex; align-items: center; padding: 0 4px; gap: 3px; }
.hsplit svg { width: 8px; height: 5px; }
.hsplit span { flex: 1; height: 1px; background: repeating-linear-gradient(90deg, #0078d7 0 1px, transparent 1px 3px); }
.extra { flex: 1; min-height: 0; margin-top: 2px; border: 1px solid #a0a0a0; background: #fefad2; display: flex; flex-direction: column; }
.extra table { width: 100%; }
.extra th { height: 19px; }
.extra th:last-child { border-right: 0; }
.e-mark { width: 12px; } .e-num { width: 52px; } .e-birth { width: 187px; } .e-author { width: 128px; }
.extra p { flex: 1; display: flex; align-items: center; justify-content: center; color: #808080; }

.windows { height: 26px; flex: none; display: flex; border-top: 1px solid #e4e4e4; padding: 1px 8px 1px 3px; font: 12px Roboto, "Noto Sans", sans-serif; }
.wtab { display: flex; margin-right: 6px; color: #444; }
.current-win { color: #000; }
.slant { width: 8px; height: 24px; }
.wbody { display: flex; align-items: center; gap: 5px; border-right: 1px solid #bbb; border-bottom: 1px solid #bbb; padding: 0 4px 0 3px; white-space: nowrap; background: linear-gradient(#fff 40%, #f3f3f3); }
.wbody span { margin-right: 5px; }
.current-win .wbody { background: #fff; border-color: #888; }
.windows button { width: 19px; height: 19px; }
.windows button svg { display: block; width: 19px; height: 19px; }
.list { margin: 2px 0 0 auto; }
</style>
